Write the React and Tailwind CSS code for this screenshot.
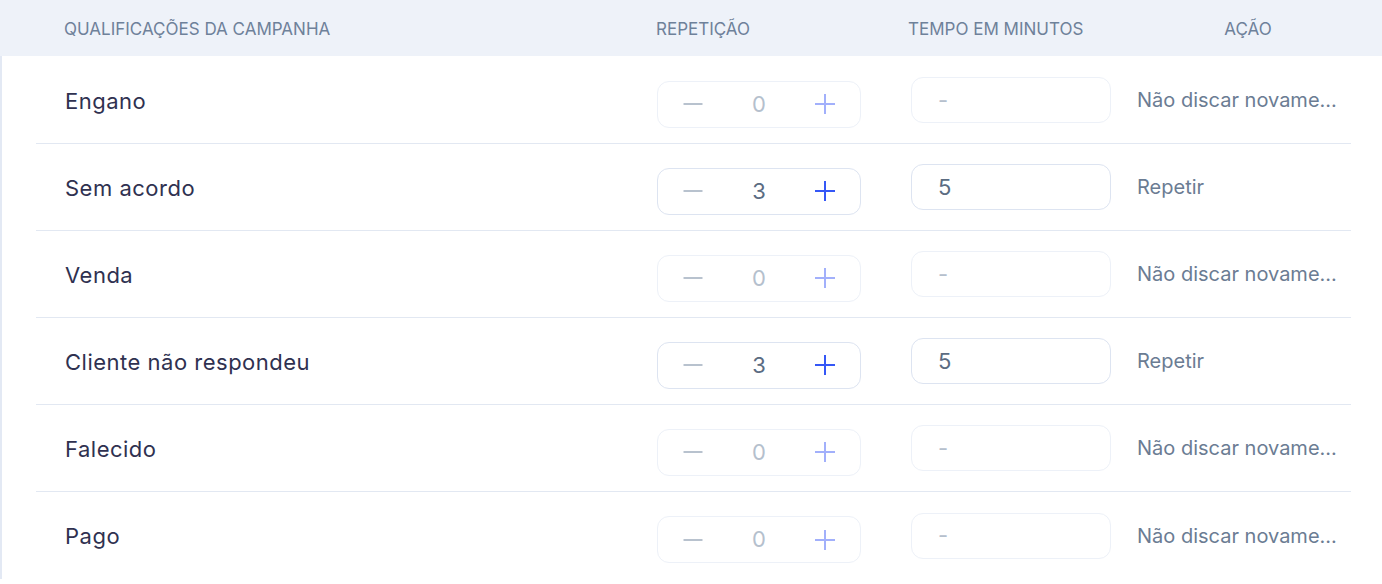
const rows = [
  { name: 'Engano', count: 0, time: '', action: 'Não discar novame...' },
  { name: 'Sem acordo', count: 3, time: '5', action: 'Repetir' },
  { name: 'Venda', count: 0, time: '', action: 'Não discar novame...' },
  { name: 'Cliente não respondeu', count: 3, time: '5', action: 'Repetir' },
  { name: 'Falecido', count: 0, time: '', action: 'Não discar novame...' },
  { name: 'Pago', count: 0, time: '', action: 'Não discar novame...' },
];

function Stepper({ value }) {
  const active = value > 0;
  return (
    <div
      className={
        'mt-[8px] flex h-[47px] w-[204px] items-center justify-between rounded-[12px] border px-[25px] ' +
        (active ? 'border-[#dde4f1]' : 'border-[#edf1f8]')
      }
    >
      <svg width="20" height="20" viewBox="0 0 20 20">
        <line x1="0.5" y1="10" x2="19.5" y2="10" stroke="#b8c2ce" strokeWidth="2" />
      </svg>
      <span className={'text-[22px] ' + (active ? 'text-[#5b6c82]' : 'text-[#b5c0cd]')}>{value}</span>
      <svg width="20" height="20" viewBox="0 0 20 20">
        <line x1="0" y1="10" x2="20" y2="10" stroke={active ? '#3557f6' : '#a2b0fb'} strokeWidth="2" />
        <line x1="10" y1="0" x2="10" y2="20" stroke={active ? '#3557f6' : '#a2b0fb'} strokeWidth="2" />
      </svg>
    </div>
  );
}

export default function App() {
  return (
    <div className="w-[1382px] h-[584px] overflow-hidden bg-white font-['Inter',sans-serif]">
      {/* cabeçalho */}
      <div className="flex h-[56px] items-center bg-[#eef2f9] pt-[3px] text-[17px] uppercase text-[#6e819a]">
        <div className="w-[656px] pl-[64px]">Qualificações da campanha</div>
        <div className="w-[252px]">Repetição</div>
        <div className="w-[230px]">Tempo em minutos</div>
        <div className="w-[220px] text-center">Ação</div>
      </div>
      <div className="border-l-2 border-[#e3e9f4] pt-[1px]">
        <div className="ml-[34px] mr-[31px]">
          {rows.map((r, i) => (
            <div
              key={r.name}
              className={
                'flex h-[87px] items-center pl-[29px] ' +
                (i < rows.length - 1 ? 'border-b border-[#e2e8f2]' : '')
              }
            >
              <div className="w-[592px] pt-[2px] text-[22px] tracking-[0.5px] text-[#2f3150]">{r.name}</div>
              <Stepper value={r.count} />
              <div
                className={
                  'ml-[50px] flex h-[46px] w-[200px] items-center rounded-[12px] border pl-[26px] text-[22px] ' +
                  (r.time ? 'border-[#dde4f1] text-[#5b6c82]' : 'border-[#edf1f8] text-[#b5c0cd]')
                }
              >
                {r.time || '-'}
              </div>
              <div className="ml-[26px] whitespace-nowrap text-[20px] text-[#6b7c93]">{r.action}</div>
            </div>
          ))}
        </div>
      </div>
    </div>
  );
}
